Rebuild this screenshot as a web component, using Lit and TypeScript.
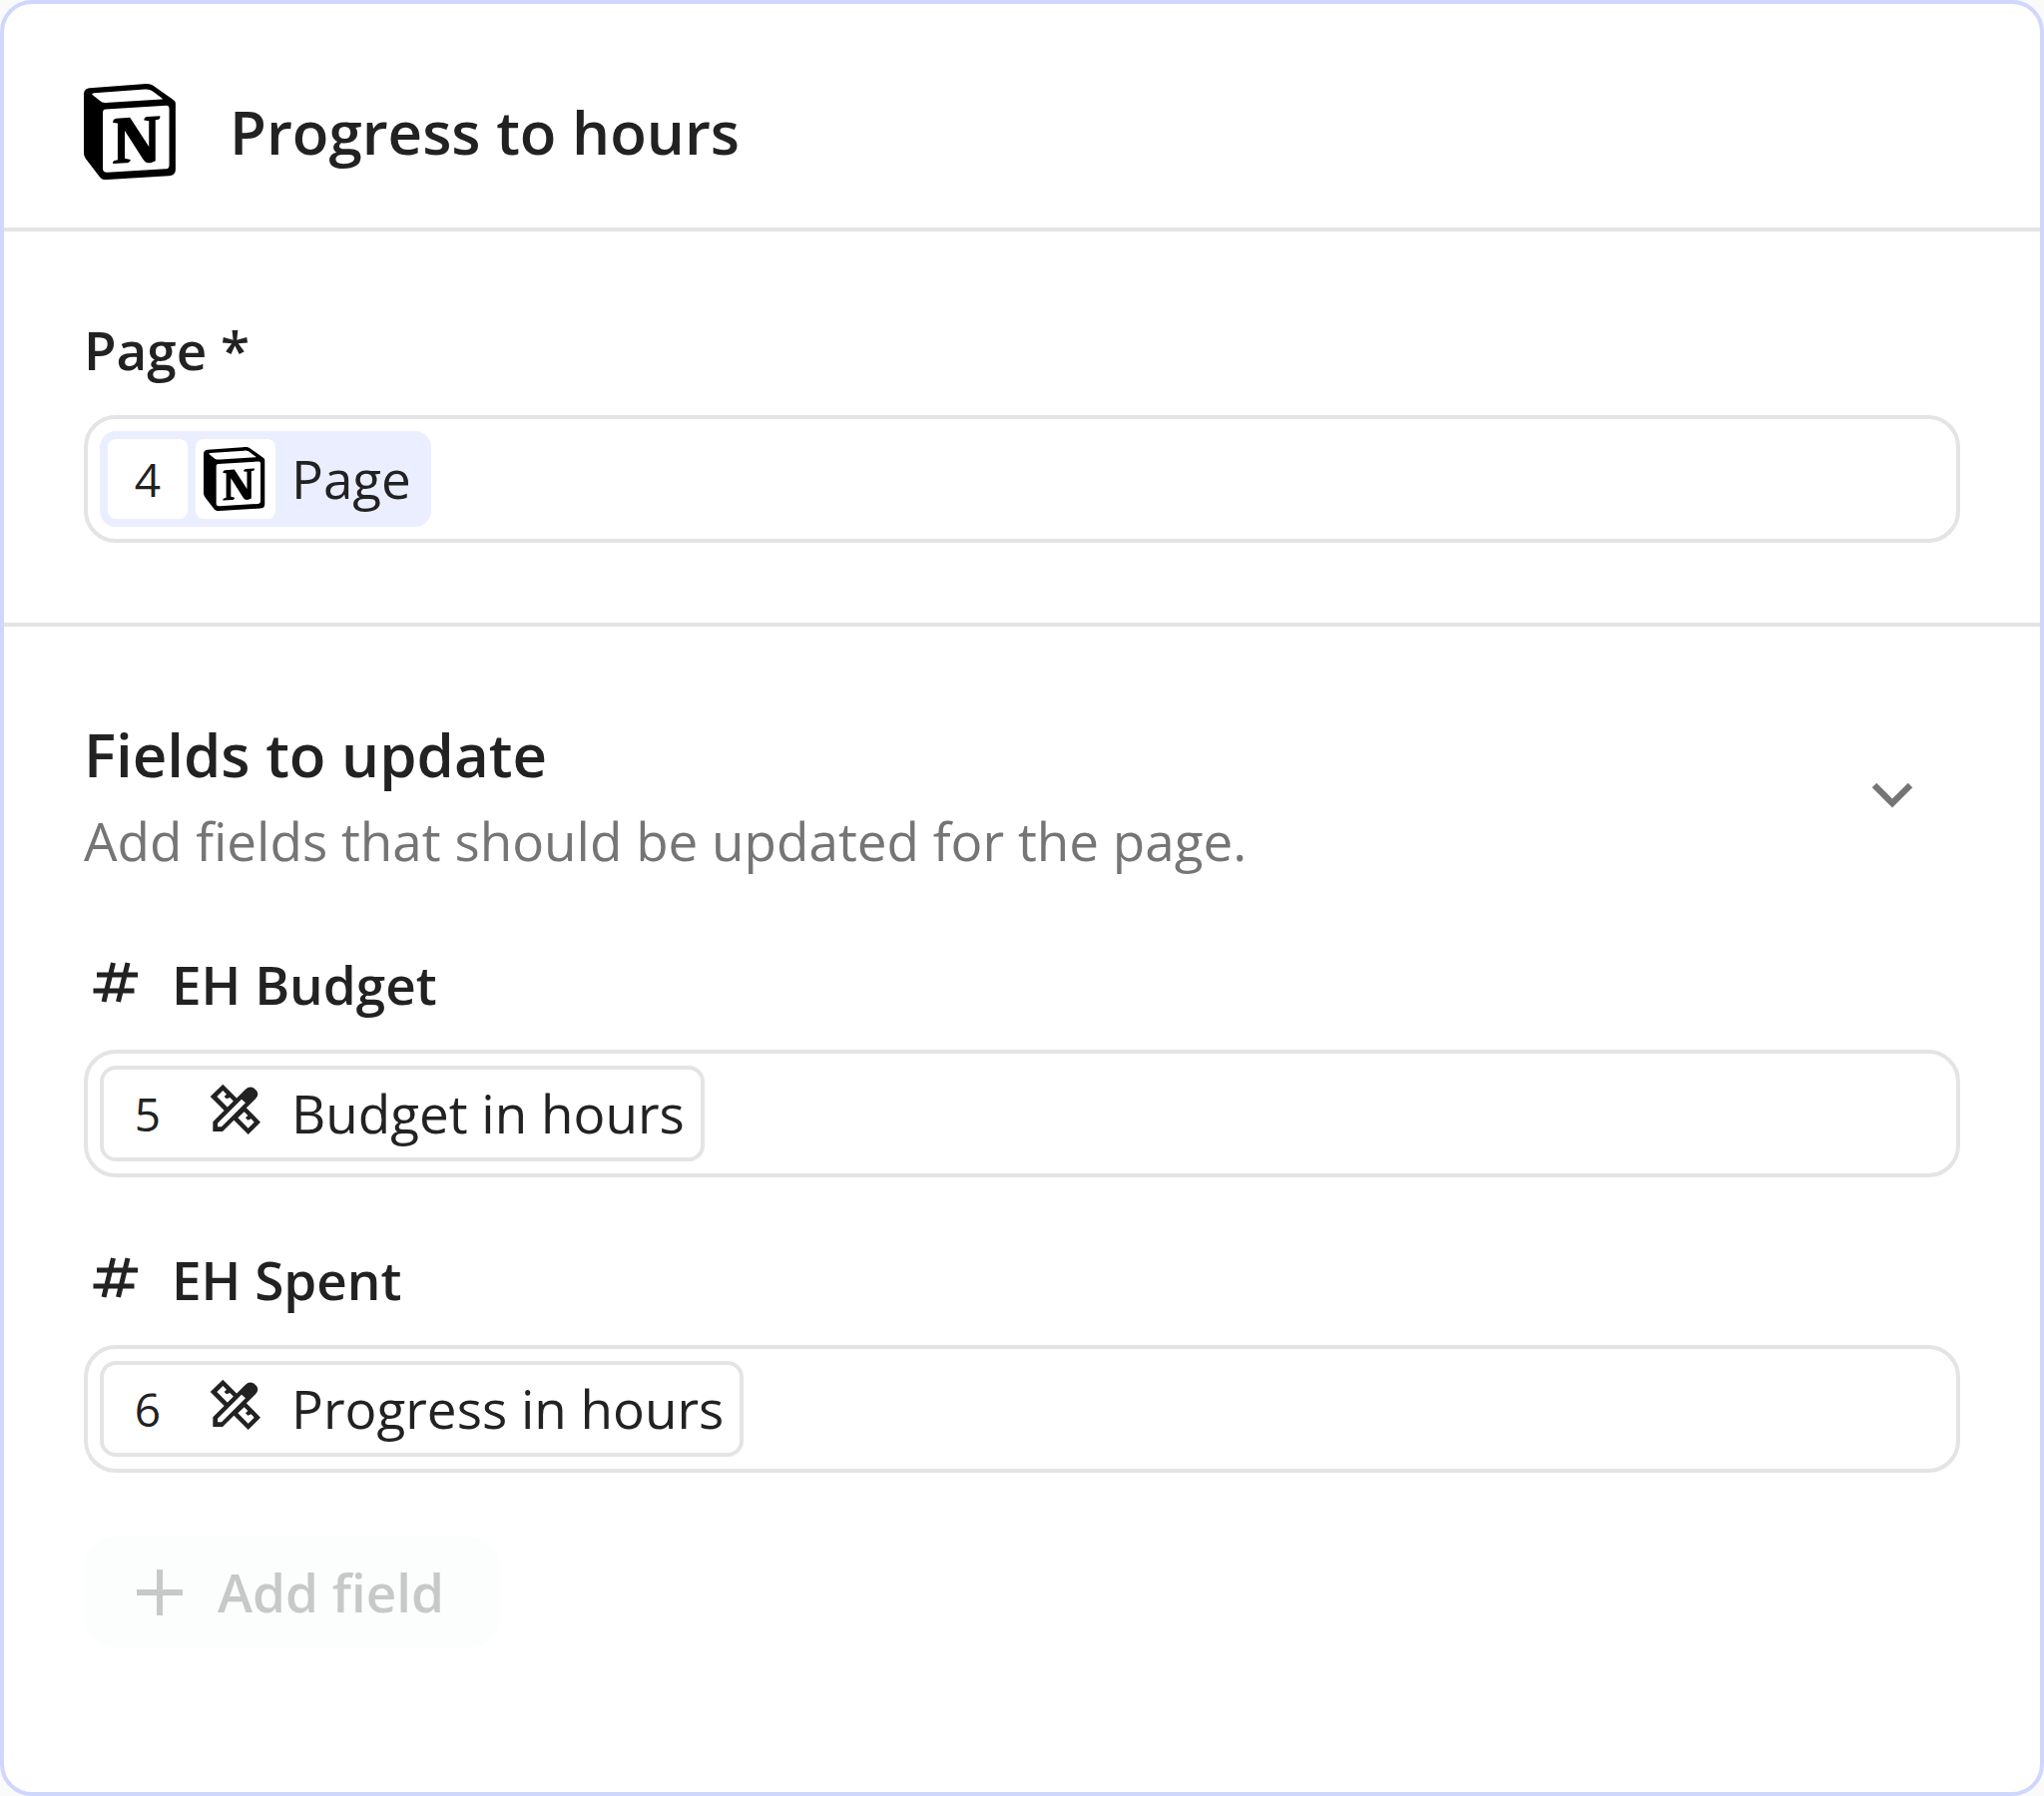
import { LitElement, html, css, svg, nothing } from "lit";
import { customElement, property, state } from "lit/decorators.js";

const notionLogo = svg`
  <path fill="#fff" d="M6.017 4.313l55.333-4.087c6.797-.583 8.543-.19 12.817 2.917l17.663 12.443c2.913 2.14 3.883 2.723 3.883 5.053v68.243c0 4.277-1.553 6.807-6.99 7.193L24.467 99.967c-4.08.193-6.023-.39-8.16-3.113L3.3 79.94C.967 76.827 0 74.497 0 71.773V11.113c0-3.497 1.553-6.413 6.017-6.8z"/>
  <path fill="#000" fill-rule="evenodd" d="M61.35.227l-55.333 4.087C1.553 4.7 0 7.617 0 11.113v60.66c0 2.723.967 5.053 3.3 8.167l13.007 16.913c2.137 2.723 4.08 3.307 8.16 3.113l64.257-3.89c5.433-.387 6.99-2.917 6.99-7.193V20.64c0-2.21-.873-2.847-3.443-4.733L74.167 3.143C69.893.037 68.147-.357 61.35.227zM25.92 19.523c-5.247.353-6.437.433-9.417-1.99L8.927 11.507c-.77-.78-.383-1.753 1.557-1.947l53.193-3.887c4.467-.39 6.793 1.167 8.54 2.527l9.123 6.61c.39.197 1.36 1.36.193 1.36l-54.933 3.307-.68.047zM19.803 88.3V30.367c0-2.53.777-3.697 3.103-3.893L86 22.78c2.14-.193 3.107 1.167 3.107 3.693v57.547c0 2.53-.39 4.67-3.883 4.863l-60.377 3.5c-3.493.193-5.043-.97-5.043-4.083zm59.6-54.827c.387 1.75 0 3.5-1.75 3.7l-2.91.577v42.773c-2.527 1.36-4.853 2.137-6.797 2.137-3.107 0-3.883-.973-6.21-3.887l-19.03-29.94v28.967l6.02 1.363s0 3.5-4.857 3.5l-13.39.777c-.39-.78 0-2.723 1.357-3.11l3.497-.97v-38.3L30.48 40.667c-.39-1.75.58-4.277 3.3-4.473l14.367-.967 19.8 30.327v-26.83l-5.047-.58c-.39-2.143 1.163-3.7 3.103-3.89l13.4-.78z"/>`;

interface Variable {
  step: number;
  source: "notion" | "formula";
  label: string;
}

@customElement("variable-chip")
export class VariableChip extends LitElement {
  @property({ attribute: false }) variable!: Variable;

  static styles = css`
    :host {
      display: block;
      flex: none;
    }
    .chip {
      box-sizing: border-box;
      display: flex;
      align-items: center;
      gap: 8px;
      height: 96px;
      padding: 0 16px 0 4px;
      border: 4px solid #e4e4e4;
      border-radius: 16px;
      background: #fff;
    }
    .notion {
      border-color: #ebeeff;
      background: #ebeeff;
    }
    .badge {
      display: flex;
      align-items: center;
      justify-content: center;
      width: 80px;
      height: 80px;
      border-radius: 8px;
      background: #fff;
      font-size: 46px;
    }
    .label {
      padding-left: 8px;
      white-space: nowrap;
    }
    .logo {
      width: 64px;
      height: 64px;
    }
    .tools {
      width: 52px;
      height: 52px;
      padding-bottom: 8px;
    }
  `;

  private icon() {
    return this.variable.source === "notion"
      ? html`<svg class="logo" viewBox="0 0 100 100" aria-hidden="true">${notionLogo}</svg>`
      : html`<svg class="tools" viewBox="30 34 156 156" aria-hidden="true">
          <path fill="#222" d="M70 36L183 150L146 187L32 73Z" />
          <path fill="#fff" d="M70 55L81 66L74 73L81 80L91 76L102 87L84 105L52 73Z" />
          <path fill="#fff" d="M134 119L145 130L138 137L145 144L155 140L164 150L146 168L115 137Z" />
          <path fill="#222" d="M40 178V149L138 51Q150 39 164 48L171 55Q180 67 168 80L69 178Z" />
          <path fill="#fff" d="M54 164V153L126 81L138 92L66 164Z" />
        </svg>`;
  }

  render() {
    const { step, source, label } = this.variable;
    return html`<div class="chip ${source}">
      <span class="badge">${step}</span>
      <span class="badge">${this.icon()}</span>
      <span class="label">${label}</span>
    </div>`;
  }
}

@customElement("variable-field")
export class VariableField extends LitElement {
  @property() label = "";
  @property({ type: Boolean }) numeric = false;
  @property({ attribute: false }) variable!: Variable;

  static styles = css`
    :host {
      display: block;
    }
    .label {
      display: flex;
      align-items: center;
      margin-bottom: 26px;
      font-weight: 600;
    }
    .hash {
      flex: none;
      width: 64px;
      height: 56px;
      margin-right: 24px;
    }
    .box {
      box-sizing: border-box;
      display: flex;
      align-items: center;
      gap: 16px;
      height: 128px;
      padding: 0 12px;
      border: 4px solid #e4e4e4;
      border-radius: 32px;
    }
    .entry {
      flex: 1;
      min-width: 0;
      height: 96px;
      padding: 0;
      border: 0;
      outline: 0;
      background: none;
      color: inherit;
      font: inherit;
    }
  `;

  render() {
    return html`
      <label class="label" for="entry">
        ${this.numeric
          ? html`<svg class="hash" viewBox="84 959 64 56" aria-hidden="true">
              <path
                fill="none"
                stroke="#222"
                stroke-width="5"
                d="M113.500 965L104 1004M128 965L118.500 1004M97 977H138M93.500 993H134.500"
              />
            </svg>`
          : nothing}
        ${this.label}
      </label>
      <div class="box">
        <variable-chip .variable=${this.variable}></variable-chip>
        <input class="entry" id="entry" type="text" />
      </div>
    `;
  }
}

@customElement("app-root")
export class AppRoot extends LitElement {
  @state() private open = true;

  static styles = css`
    :host {
      display: block;
      background: #fafafa;
      color: #222;
      font-family: "Open Sans", sans-serif;
      font-size: 53px;
      line-height: 78px;
    }
    .card {
      box-sizing: border-box;
      min-height: 100vh;
      border: 4px solid #d0d7ff;
      border-radius: 32px;
      background: #fff;
    }
    .header {
      display: flex;
      align-items: center;
      gap: 50px;
      padding: 80px 80px 48px;
      border-bottom: 4px solid #e4e4e4;
    }
    .logo {
      flex: none;
      width: 96px;
      height: 96px;
    }
    .title,
    .heading {
      margin: 0;
      font-size: 60px;
      font-weight: 600;
      line-height: 96px;
    }
    .section {
      padding: 80px;
    }
    .section + .section {
      border-top: 4px solid #e4e4e4;
    }
    .summary {
      display: flex;
      align-items: center;
      justify-content: space-between;
      margin-bottom: 66px;
    }
    .hint {
      margin: 0;
      color: #757575;
    }
    .toggle {
      display: flex;
      flex: none;
      margin-right: 28px;
      padding: 0;
      border: 0;
      background: none;
      cursor: pointer;
    }
    .chevron {
      width: 80px;
      height: 80px;
    }
    .fields {
      display: grid;
      gap: 64px;
    }
    .add {
      display: flex;
      align-items: center;
      justify-self: start;
      gap: 34px;
      height: 112px;
      padding: 0 56px 0 52px;
      border: 0;
      border-radius: 32px;
      background: #fbfefd;
      color: #c8c8c8;
      font: inherit;
      font-weight: 600;
    }
    .plus {
      width: 48px;
      height: 48px;
    }
  `;

  render() {
    return html`
      <main class="card">
        <header class="header">
          <svg class="logo" viewBox="0 0 100 100" aria-hidden="true">${notionLogo}</svg>
          <h1 class="title">Progress to hours</h1>
        </header>
        <section class="section">
          <variable-field
            label="Page *"
            .variable=${{ step: 4, source: "notion", label: "Page" }}
          ></variable-field>
        </section>
        <section class="section">
          <div class="summary">
            <div>
              <h2 class="heading">Fields to update</h2>
              <p class="hint">Add fields that should be updated for the page.</p>
            </div>
            <button
              class="toggle"
              type="button"
              aria-label="Toggle fields"
              aria-expanded=${this.open}
              @click=${() => (this.open = !this.open)}
            >
              <svg class="chevron" viewBox="0 0 80 80" aria-hidden="true">
                <path fill="none" stroke="#757575" stroke-width="6.300" d="M22 32L40 50L58 32" />
              </svg>
            </button>
          </div>
          ${this.open
            ? html`<div class="fields">
                <variable-field
                  label="EH Budget"
                  numeric
                  .variable=${{ step: 5, source: "formula", label: "Budget in hours" }}
                ></variable-field>
                <variable-field
                  label="EH Spent"
                  numeric
                  .variable=${{ step: 6, source: "formula", label: "Progress in hours" }}
                ></variable-field>
                <button class="add" type="button" disabled>
                  <svg class="plus" viewBox="0 0 48 48" aria-hidden="true">
                    <path stroke="#c8c8c8" stroke-width="6" d="M24 1V47M1 24H47" />
                  </svg>
                  Add field
                </button>
              </div>`
            : nothing}
        </section>
      </main>
    `;
  }
}
